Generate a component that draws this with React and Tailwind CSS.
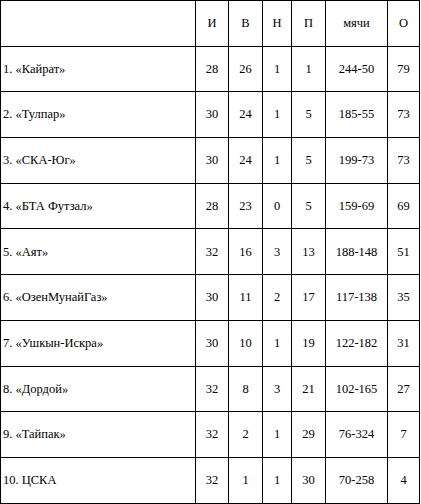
const rows = [
  ['1. «Кайрат»', 28, 26, 1, 1, '244-50', 79],
  ['2. «Тулпар»', 30, 24, 1, 5, '185-55', 73],
  ['3. «СКА-Юг»', 30, 24, 1, 5, '199-73', 73],
  ['4. «БТА Футзал»', 28, 23, 0, 5, '159-69', 69],
  ['5. «Аят»', 32, 16, 3, 13, '188-148', 51],
  ['6. «ОзенМунайГаз»', 30, 11, 2, 17, '117-138', 35],
  ['7. «Ушкын-Искра»', 30, 10, 1, 19, '122-182', 31],
  ['8. «Дордой»', 32, 8, 3, 21, '102-165', 27],
  ['9. «Тайпак»', 32, 2, 1, 29, '76-324', 7],
  ['10. ЦСКА', 32, 1, 1, 30, '70-258', 4],
]

const header = ['', 'И', 'В', 'Н', 'П', 'мячи', 'О']

function Cell({ children, first }) {
  return (
    <div
      className={
        'flex items-center border-r border-b border-black ' +
        (first ? 'justify-start pl-[2px]' : 'justify-center')
      }
    >
      {children}
    </div>
  )
}

export default function App() {
  return (
    <div className="bg-white w-[421px] h-[504px] font-['Liberation_Serif','Times_New_Roman',serif]">
      <div className="grid w-[420px] grid-cols-[195px_33px_34px_29px_34px_62px_32px] auto-rows-[45.7px] border-l border-t border-black text-[12.5px] text-black leading-none">
        {header.map((h, i) => (
          <Cell key={'h' + i} first={i === 0}>{h}</Cell>
        ))}
        {rows.map((r, ri) =>
          r.map((v, ci) => (
            <Cell key={ri + '-' + ci} first={ci === 0}>{v}</Cell>
          ))
        )}
      </div>
    </div>
  )
}
